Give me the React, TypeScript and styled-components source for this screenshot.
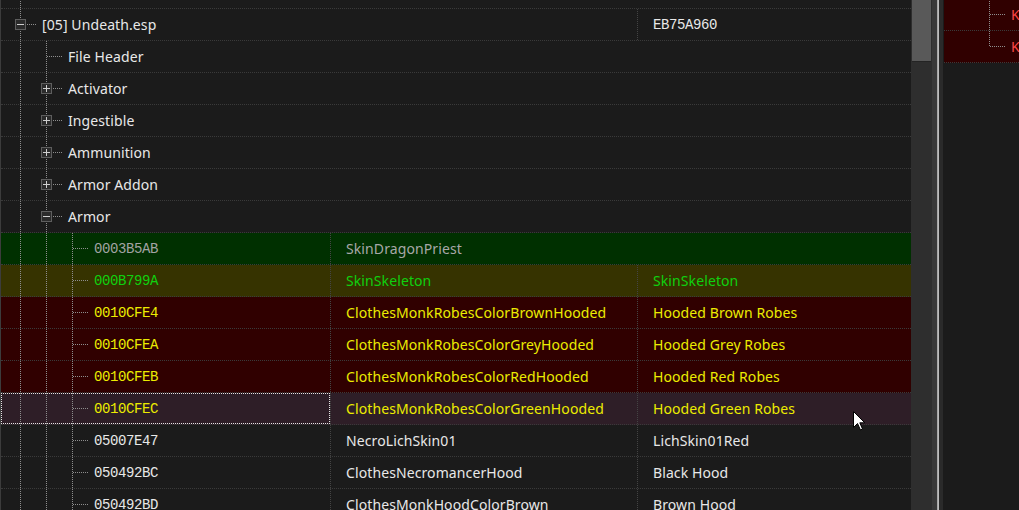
import React from 'react';
import styled, { createGlobalStyle } from 'styled-components';

const Global = createGlobalStyle`
  html, body { margin: 0; padding: 0; background: #1b1b1b; overflow: hidden; }
  body { font-family: "Noto Sans", "Segoe UI", sans-serif; }
`;

const UI_FONT = `"Noto Sans", "Liberation Sans", sans-serif`;
const MONO_FONT = `"Liberation Mono", "DejaVu Sans Mono", monospace`;

const Screen = styled.div`
  position: relative;
  display: flex;
  width: 1019px;
  height: 510px;
  overflow: hidden;
  background: #1b1b1b;
`;

const TreePane = styled.div`
  flex: none;
  width: 911px;
  box-sizing: border-box;
  border-left: 1px solid #3c3c3c;
  overflow: hidden;
`;

const List = styled.div<{ $shift: number; $pad?: number }>`
  display: flex;
  flex-direction: column;
  margin-top: ${(p) => -p.$shift}px;
  padding-left: ${(p) => p.$pad ?? 0}px;
`;

const Row = styled.div<{ $bg: string }>`
  display: flex;
  flex: none;
  height: 32px;
  box-sizing: border-box;
  border-bottom: 1px dotted #3a3a3a;
  background: ${(p) => p.$bg};
`;

const TreeCell = styled.div<{ $width?: number; $focus?: boolean }>`
  display: flex;
  align-items: center;
  flex: ${(p) => (p.$width ? 'none' : '1')};
  width: ${(p) => (p.$width ? `${p.$width}px` : 'auto')};
  height: 31px;
  box-sizing: border-box;
  overflow: hidden;
  white-space: nowrap;
  outline: ${(p) => (p.$focus ? '1px dotted #e4e4e4' : 'none')};
  outline-offset: -1px;
`;

const DataCell = styled.div<{ $width?: number }>`
  display: flex;
  align-items: center;
  flex: ${(p) => (p.$width ? 'none' : '1')};
  width: ${(p) => (p.$width ? `${p.$width}px` : 'auto')};
  height: 31px;
  box-sizing: border-box;
  padding-left: 15px;
  border-left: 1px dotted #444444;
  overflow: hidden;
  white-space: nowrap;
`;

const Label = styled.span<{ $mono?: boolean; $color: string }>`
  font-family: ${(p) => (p.$mono ? MONO_FONT : UI_FONT)};
  font-size: 14px;
  letter-spacing: ${(p) => (p.$mono ? '-0.4px' : '0.1px')};
  color: ${(p) => p.$color};
  line-height: 31px;
  padding-top: ${(p) => (p.$mono ? '2px' : '0')};
`;

const Glyph = styled.svg`
  display: block;
  flex: none;
`;

const Scrollbar = styled.div`
  flex: none;
  width: 21px;
  height: 100%;
  background: #2e2e2e;
  padding-left: 1px;
  box-sizing: border-box;
`;

const Thumb = styled.div`
  width: 19px;
  height: 62px;
  box-sizing: border-box;
  background: #595959;
  border-bottom: 1px solid #242424;
`;

const Splitter = styled.div`
  flex: none;
  width: 11px;
  height: 100%;
  background: linear-gradient(
    to right,
    #393939 0px,
    #393939 5px,
    #8f8f8f 5px,
    #bdbdbd 6px,
    #bdbdbd 7px,
    #2a2a2a 7px,
    #2a2a2a 11px
  );
`;

const SidePane = styled.div`
  flex: 1;
  overflow: hidden;
  background: #1b1b1b;
`;

const Cursor = styled.svg`
  position: absolute;
  left: 853px;
  top: 411px;
`;

const LINE = '#8e8e8e';

function Guide({ line }: { line: boolean }) {
  return (
    <Glyph width={26} height={31} viewBox="0 0 26 31" shapeRendering="crispEdges">
      {line && <line x1={19.5} y1={0} x2={19.5} y2={31} stroke={LINE} strokeDasharray="1 1" />}
    </Glyph>
  );
}

function Node({ last, box }: { last?: boolean; box?: 'plus' | 'minus' }) {
  return (
    <Glyph width={41} height={31} viewBox="0 0 41 31" shapeRendering="crispEdges">
      <line x1={19.5} y1={0} x2={19.5} y2={last ? 16 : 31} stroke={LINE} strokeDasharray="1 1" />
      <line x1={20} y1={15.5} x2={36} y2={15.5} stroke={LINE} strokeDasharray="1 1" />
      {box && (
        <g>
          <rect x={14.5} y={10.5} width={10} height={10} fill="#2b2b2b" stroke="#5e5e5e" />
          <line x1={16} y1={15.5} x2={23} y2={15.5} stroke="#cfcfcf" />
          {box === 'plus' && <line x1={19.5} y1={12} x2={19.5} y2={19} stroke="#cfcfcf" />}
        </g>
      )}
    </Glyph>
  );
}

type Category = { label: string; box?: 'plus' | 'minus' };

const categories: Category[] = [
  { label: 'File Header' },
  { label: 'Activator', box: 'plus' },
  { label: 'Ingestible', box: 'plus' },
  { label: 'Ammunition', box: 'plus' },
  { label: 'Armor Addon', box: 'plus' },
  { label: 'Armor', box: 'minus' },
];

type Tone = 'green' | 'olive' | 'red' | 'selected' | 'plain';

const tones: Record<Tone, { bg: string; id: string; text: string }> = {
  green: { bg: '#003000', id: '#a3a3a3', text: '#a8a8a8' },
  olive: { bg: '#363300', id: '#0fd00f', text: '#0fd00f' },
  red: { bg: '#300000', id: '#ecec00', text: '#ecec00' },
  selected: { bg: '#2e1e27', id: '#ecec00', text: '#ecec00' },
  plain: { bg: '#1b1b1b', id: '#e8e8e8', text: '#e8e8e8' },
};

type Rec = { id: string; edid: string; name?: string; tone: Tone };

const records: Rec[] = [
  { id: '0003B5AB', edid: 'SkinDragonPriest', tone: 'green' },
  { id: '000B799A', edid: 'SkinSkeleton', name: 'SkinSkeleton', tone: 'olive' },
  { id: '0010CFE4', edid: 'ClothesMonkRobesColorBrownHooded', name: 'Hooded Brown Robes', tone: 'red' },
  { id: '0010CFEA', edid: 'ClothesMonkRobesColorGreyHooded', name: 'Hooded Grey Robes', tone: 'red' },
  { id: '0010CFEB', edid: 'ClothesMonkRobesColorRedHooded', name: 'Hooded Red Robes', tone: 'red' },
  { id: '0010CFEC', edid: 'ClothesMonkRobesColorGreenHooded', name: 'Hooded Green Robes', tone: 'selected' },
  { id: '05007E47', edid: 'NecroLichSkin01', name: 'LichSkin01Red', tone: 'plain' },
  { id: '050492BC', edid: 'ClothesNecromancerHood', name: 'Black Hood', tone: 'plain' },
  { id: '050492BD', edid: 'ClothesMonkHoodColorBrown', name: 'Brown Hood', tone: 'plain' },
];

const BG = '#1b1b1b';
const WHITE = '#e8e8e8';

export default function App() {
  return (
    <>
      <Global />
      <Screen>
        <TreePane>
          <List $shift={23}>
            <Row $bg={BG}>
              <TreeCell>
                <Node box="plus" />
              </TreeCell>
            </Row>
            <Row $bg={BG}>
              <TreeCell $width={636}>
                <Node box="minus" />
                <Label $color={WHITE}>[05] Undeath.esp</Label>
              </TreeCell>
              <DataCell>
                <Label $mono $color={WHITE}>EB75A960</Label>
              </DataCell>
            </Row>
            {categories.map((c) => (
              <Row key={c.label} $bg={BG}>
                <TreeCell>
                  <Guide line />
                  <Node box={c.box} />
                  <Label $color={WHITE}>{c.label}</Label>
                </TreeCell>
              </Row>
            ))}
            {records.map((r) => {
              const t = tones[r.tone];
              return (
                <Row key={r.id} $bg={t.bg}>
                  <TreeCell $width={329} $focus={r.tone === 'selected'}>
                    <Guide line />
                    <Guide line />
                    <Node />
                    <Label $mono $color={t.id}>{r.id}</Label>
                  </TreeCell>
                  <DataCell $width={r.name ? 307 : undefined}>
                    <Label $color={t.text}>{r.edid}</Label>
                  </DataCell>
                  {r.name && (
                    <DataCell>
                      <Label $color={t.text}>{r.name}</Label>
                    </DataCell>
                  )}
                </Row>
              );
            })}
          </List>
        </TreePane>
        <Scrollbar>
          <Thumb />
        </Scrollbar>
        <Splitter />
        <SidePane>
          <List $shift={1} $pad={1}>
            <Row $bg="#300000">
              <TreeCell>
                <Guide line={false} />
                <Node />
                <Label $color="#ff4646">Keyword</Label>
              </TreeCell>
            </Row>
            <Row $bg="#300000">
              <TreeCell>
                <Guide line={false} />
                <Node last />
                <Label $color="#ff4646">Keyword</Label>
              </TreeCell>
            </Row>
          </List>
        </SidePane>
        <Cursor width={13} height={20} viewBox="0 0 13 20">
          <path
            d="M0.5 0.5 L0.5 16.5 L4.5 12.5 L7.5 19 L9.5 18 L6.8 11.8 L11.8 11.8 Z"
            fill="#ffffff"
            stroke="#000000"
            strokeWidth={1}
            strokeLinejoin="miter"
          />
        </Cursor>
      </Screen>
    </>
  );
}
